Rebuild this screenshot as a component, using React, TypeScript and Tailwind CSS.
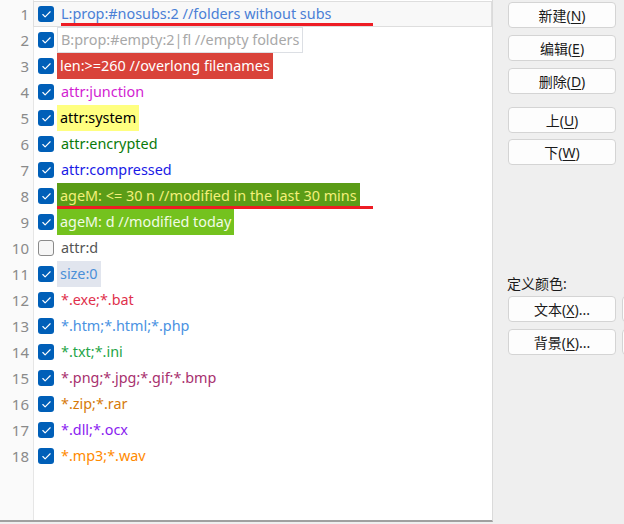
import { Check } from 'lucide-react';

type Row = {
    text: string;
    checked?: boolean;
    cls: string;
    underline?: string;
};

const rows: Row[] = [
    { text: 'L:prop:#nosubs:2 //folders without subs', cls: 'text-[#4a7fd6]', underline: 'w-[312px]' },
    { text: 'B:prop:#empty:2|fl //empty folders', cls: 'text-[#a8a8a8] border border-[#dcdfe4] px-[3px] -ml-[4px]' },
    { text: 'len:>=260 //overlong filenames', cls: 'text-white bg-[#d9433a] px-[3px] -ml-[4px]' },
    { text: 'attr:junction', cls: 'text-[#d21ed2]' },
    { text: 'attr:system', cls: 'text-black bg-[#ffff80] px-[3px] -ml-[4px]' },
    { text: 'attr:encrypted', cls: 'text-[#0a7a0a]' },
    { text: 'attr:compressed', cls: 'text-[#1a1ae6]' },
    { text: 'ageM: <= 30 n //modified in the last 30 mins', cls: 'text-[#f4f07a] bg-[#5b9c17] px-[3px] -ml-[4px]', underline: 'w-[316px] -ml-[4px]' },
    { text: 'ageM: d //modified today', cls: 'text-[#f2fbe6] bg-[#74c21e] px-[3px] -ml-[4px]' },
    { text: 'attr:d', checked: false, cls: 'text-[#555555]' },
    { text: 'size:0', cls: 'text-[#4a8fd8] bg-[#e1e5ee] px-[3px] -ml-[4px]' },
    { text: '*.exe;*.bat', cls: 'text-[#e0304c]' },
    { text: '*.htm;*.html;*.php', cls: 'text-[#4a92e2]' },
    { text: '*.txt;*.ini', cls: 'text-[#1fa548]' },
    { text: '*.png;*.jpg;*.gif;*.bmp', cls: 'text-[#a8306e]' },
    { text: '*.zip;*.rar', cls: 'text-[#d67a0a]' },
    { text: '*.dll;*.ocx', cls: 'text-[#8a1cf0]' },
    { text: '*.mp3;*.wav', cls: 'text-[#ff8a00]' },
];

function Btn({ label, k, suffix = '' }: { label: string; k: string; suffix?: string }) {
    return (
        <div className="w-[108px] h-[26px] flex items-center justify-center bg-[#fdfdfd] border border-[#d4d4d4] rounded-[4px] text-[14px] text-[#1a1a1a]">
            {label}(<span className="underline underline-offset-2">{k}</span>){suffix}
        </div>
    );
}

export default function App() {
    return (
        <div
            className="w-[624px] h-[524px] bg-[#efefef] flex overflow-hidden"
            style={{ fontFamily: '"Noto Sans", "Noto Sans CJK SC", sans-serif' }}
        >
            {/* List */}
            <div className="w-[493px] h-[522px] bg-white border-r border-[#dadada] border-b-2 border-b-[#a0a0a0] flex shrink-0">
                <div className="w-[34px] bg-[#fafafa] border-r border-[#e6e6e6] shrink-0 pt-[1px]">
                    {rows.map((_, i) => (
                        <div key={i} className="h-[26px] flex items-center justify-end pr-[4px] text-[15px] text-[#8a8a8a]">
                            {i + 1}
                        </div>
                    ))}
                </div>
                <div className="flex-1 pt-[1px]">
                    {rows.map((r, i) => (
                        <div
                            key={i}
                            className={`relative h-[26px] flex items-center pl-[4px] ${i === 0 ? 'bg-[#f8f8f8] border border-[#dedede] -ml-[1px] pl-[4px]' : ''}`}
                        >
                            {r.checked === false ? (
                                <div className="w-[16px] h-[16px] rounded-[3px] border border-[#8a8a8a] bg-[#f6f6f6] shrink-0" />
                            ) : (
                                <div className="w-[16px] h-[16px] rounded-[3px] bg-[#005fb8] flex items-center justify-center shrink-0">
                                    <Check size={11} strokeWidth={2.5} className="text-white" />
                                </div>
                            )}
                            <div className="ml-[7px] h-[26px] flex flex-col">
                                <span className={`h-[26px] flex items-center text-[14.4px] leading-none whitespace-nowrap self-start ${r.cls}`}>
                                    {r.text}
                                </span>
                            </div>
                            {r.underline && (
                                <div className={`absolute left-[27px] bottom-[0px] h-[3px] bg-[#ee1c24] ${r.underline}`} />
                            )}
                        </div>
                    ))}
                </div>
            </div>

            {/* Buttons */}
            <div className="flex-1 pl-[15px] pt-[2px] flex flex-col">
                <div className="flex flex-col gap-[7px]">
                    <Btn label="新建" k="N" />
                    <Btn label="编辑" k="E" />
                    <Btn label="删除" k="D" />
                </div>
                <div className="flex flex-col gap-[6px] mt-[13px]">
                    <Btn label="上" k="U" />
                    <Btn label="下" k="W" />
                </div>
                <div className="mt-[108px] text-[14px] text-[#1a1a1a] -ml-[1px]">定义颜色:</div>
                <div className="flex flex-col gap-[7px] mt-[2px]">
                    <div className="flex gap-[6px]">
                        <Btn label="文本" k="X" suffix="..." />
                        <div className="w-[10px] h-[26px] bg-[#fdfdfd] border border-[#d4d4d4] rounded-[4px]" />
                    </div>
                    <div className="flex gap-[6px]">
                        <Btn label="背景" k="K" suffix="..." />
                        <div className="w-[10px] h-[26px] bg-[#fdfdfd] border border-[#d4d4d4] rounded-[4px]" />
                    </div>
                </div>
            </div>
        </div>
    );
}
